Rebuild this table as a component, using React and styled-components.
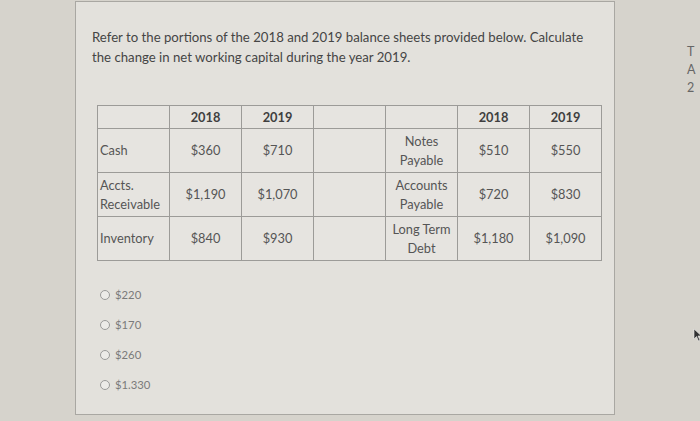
import React from "react";
import styled, { createGlobalStyle } from "styled-components";

const Global = createGlobalStyle`
  html, body { margin: 0; padding: 0; }
  body {
    width: 700px; height: 421px; overflow: hidden;
    background: #d6d3cc;
    font-family: Lato, "Open Sans", sans-serif;
  }
`;

const Page = styled.div`
  display: flex;
  width: 700px;
  height: 421px;
  padding-top: 1px;
  box-sizing: border-box;
`;

const Gutter = styled.div`
  width: 75px;
  flex: none;
`;

const Panel = styled.div`
  width: 540px;
  height: 414px;
  flex: none;
  box-sizing: border-box;
  border: 1px solid #a9a7a2;
  background: #e3e1dc;
  padding: 25px 0 0 16px;
`;

const Question = styled.p`
  margin: 0;
  width: 510px;
  font-size: 13.2px;
  line-height: 20px;
  color: #454545;
`;

const Table = styled.table`
  margin: 38px 0 0 5px;
  border-collapse: collapse;
  table-layout: fixed;
  width: 505px;
  font-size: 12.8px;
  color: #555;
  background: #e6e4e0;
  border: 1.5px solid #8e8d8a;
`;

const Cell = styled.td`
  border: 1px solid #9c9b98;
  padding: 0 2px;
  height: ${(p) => (p.$head ? "22px" : "43px")};
  text-align: ${(p) => (p.$left ? "left" : "center")};
  font-weight: ${(p) => (p.$head ? 700 : 400)};
  line-height: 19px;
  vertical-align: middle;
  color: ${(p) => (p.$head ? "#3f3f3f" : "#555")};
`;

const Options = styled.div`
  display: flex;
  flex-direction: column;
  gap: 15px;
  margin: 26px 0 0 8px;
`;

const Option = styled.label`
  display: flex;
  align-items: center;
  gap: 5px;
  font-size: 11.3px;
  line-height: 15px;
  color: #7a7a7a;
`;

const Radio = styled.span`
  width: 8px;
  height: 8px;
  border-radius: 50%;
  border: 1px solid #9a9a9a;
  background: #ecebe8;
  flex: none;
`;

const Side = styled.div`
  flex: 1;
  display: flex;
  flex-direction: column;
  padding: 42px 0 0 72px;
  font-size: 12.5px;
  line-height: 18px;
  color: #666;
  position: relative;
`;

const Cursor = styled.svg`
  position: absolute;
  left: 78px;
  top: 327px;
`;

const rows = [
  ["Cash", "$360", "$710", "Notes Payable", "$510", "$550"],
  ["Accts. Receivable", "$1,190", "$1,070", "Accounts Payable", "$720", "$830"],
  ["Inventory", "$840", "$930", "Long Term Debt", "$1,180", "$1,090"],
];

export default function App() {
  return (
    <>
      <Global />
      <Page>
        <Gutter />
        <Panel>
          <Question>
            Refer to the portions of the 2018 and 2019 balance sheets provided below. Calculate
            the change in net working capital during the year 2019.
          </Question>
          <Table>
            <tbody>
              <tr>
                <Cell $head />
                <Cell $head>2018</Cell>
                <Cell $head>2019</Cell>
                <Cell $head />
                <Cell $head />
                <Cell $head>2018</Cell>
                <Cell $head>2019</Cell>
              </tr>
              {rows.map((r) => (
                <tr key={r[0]}>
                  <Cell $left>{r[0]}</Cell>
                  <Cell>{r[1]}</Cell>
                  <Cell>{r[2]}</Cell>
                  <Cell />
                  <Cell>{r[3]}</Cell>
                  <Cell>{r[4]}</Cell>
                  <Cell>{r[5]}</Cell>
                </tr>
              ))}
            </tbody>
          </Table>
          <Options>
            {["$220", "$170", "$260", "$1.330"].map((o) => (
              <Option key={o}>
                <Radio />
                {o}
              </Option>
            ))}
          </Options>
        </Panel>
        <Side>
          <span>T</span>
          <span>A</span>
          <span>2</span>
          <Cursor width="10" height="14" viewBox="0 0 10 14">
            <path d="M1 1 L1 11 L3.5 8.5 L5.5 13 L7 12.3 L5 8 L8.5 8 Z" fill="#333" stroke="#eee" strokeWidth="0.6" />
          </Cursor>
        </Side>
      </Page>
    </>
  );
}
